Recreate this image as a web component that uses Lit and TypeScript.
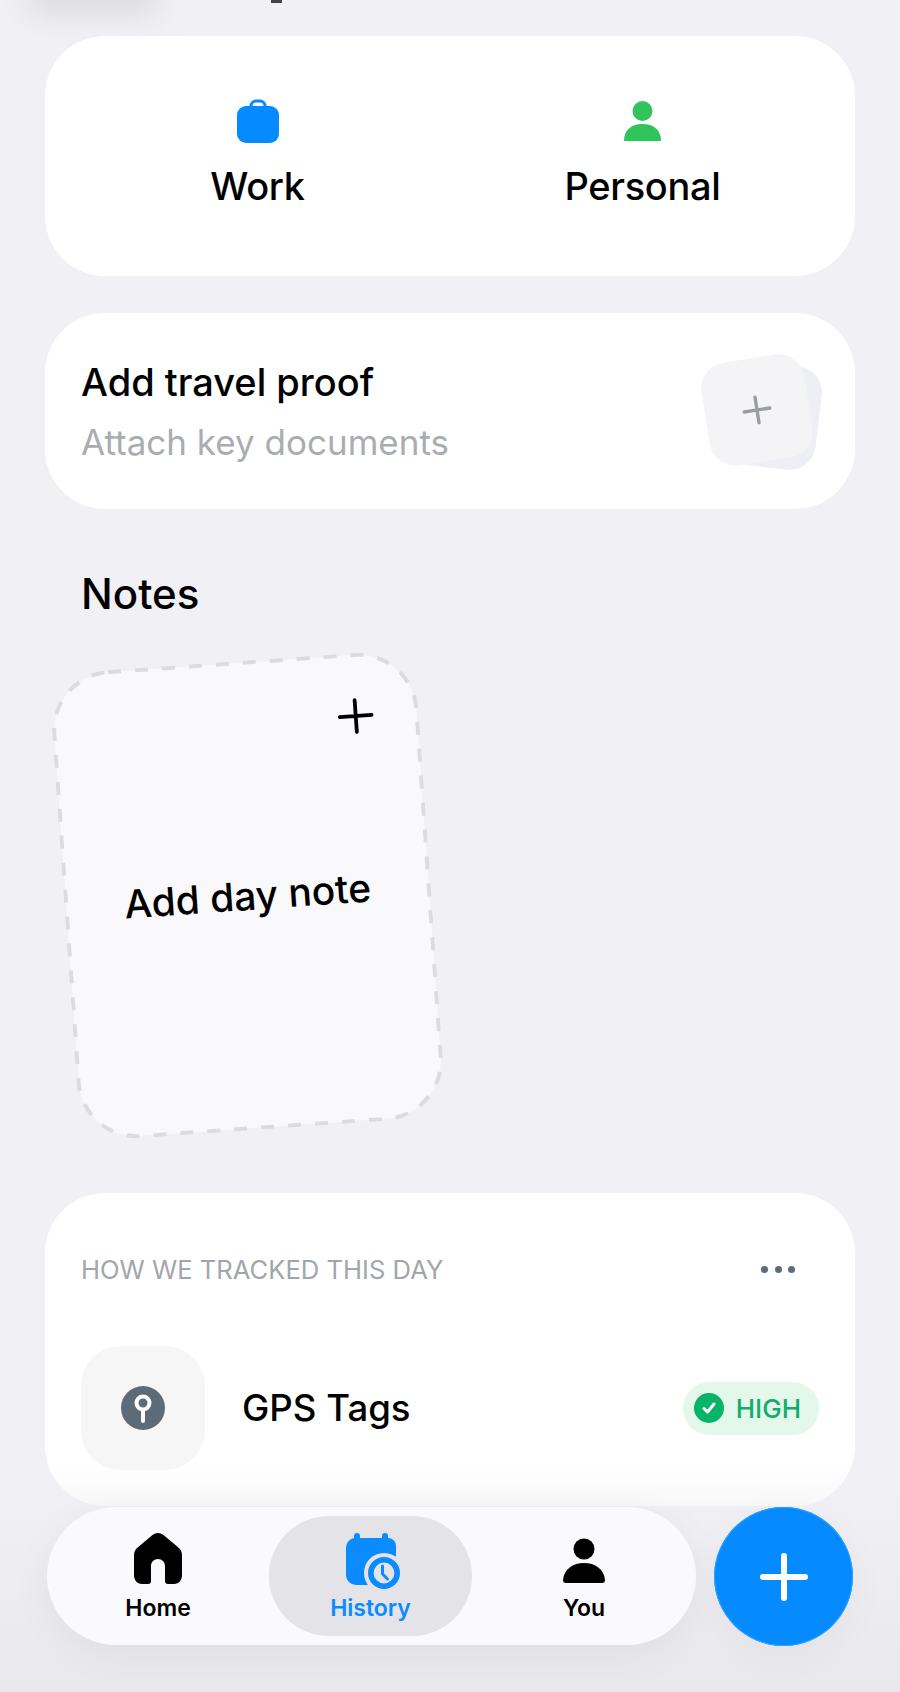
import { LitElement, css, html } from 'lit'
import { customElement } from 'lit/decorators.js'

@customElement('app-root')
export class AppRoot extends LitElement {
  static styles = css`
    :host {
      display: block;
      position: relative;
      width: 900px;
      height: 1692px;
      overflow: hidden;
      background: linear-gradient(#f0f0f5 0, #f0f0f5 1480px, #e9e9ed 1692px);
      font-family: 'Inter', 'Noto Sans', sans-serif;
      color: #000;
    }
    .smudge {
      position: absolute;
      left: 30px;
      top: -22px;
      width: 125px;
      height: 36px;
      background: #dcdcde;
      filter: blur(14px);
    }
    .clipped-letter {
      position: absolute;
      left: 271px;
      top: 0;
      width: 11px;
      height: 3px;
      background: #444;
    }
    main {
      display: flex;
      flex-direction: column;
      padding: 36px 45px 0;
    }
    .card {
      background: #fff;
      border-radius: 60px;
    }
    .kinds {
      display: grid;
      grid-template-columns: 1fr 1fr;
      height: 240px;
      padding: 0 20px;
      align-items: center;
      box-sizing: border-box;
    }
    .kind {
      display: flex;
      flex-direction: column;
      align-items: center;
      gap: 21px;
      padding-bottom: 6px;
      font-size: 38px;
      font-weight: 500;
      line-height: 44px;
      letter-spacing: -0.3px;
    }
    .kind svg {
      display: block;
    }
    .proof {
      display: flex;
      justify-content: space-between;
      align-items: center;
      height: 196px;
      margin-top: 37px;
      padding: 0 36px;
    }
    .proof h2 {
      margin: 0;
      font-size: 38px;
      font-weight: 500;
      line-height: 44px;
    }
    .proof p {
      margin: 18px 0 0;
      font-size: 35px;
      line-height: 40px;
      color: #a9adb2;
    }
    .thumbs {
      position: relative;
      width: 116px;
      height: 116px;
      margin-right: -4px;
    }
    .thumb {
      position: absolute;
      width: 104px;
      height: 104px;
      border-radius: 26px;
    }
    .thumb.back {
      left: 8px;
      top: 10px;
      background: #eeeef5;
      transform: rotate(7deg);
    }
    .thumb.front {
      left: -2px;
      top: 5px;
      background: #f4f4f6;
      transform: rotate(-9deg);
      display: flex;
      align-items: center;
      justify-content: center;
    }
    .notes-title {
      margin: 60px 0 0 36px;
      font-size: 42px;
      font-weight: 500;
      line-height: 50px;
    }
    .note {
      position: relative;
      width: 367px;
      height: 469px;
      margin: 42px 0 0 19px;
      transform: rotate(-4deg);
      display: flex;
      align-items: center;
      justify-content: center;
      font-size: 39px;
      font-weight: 500;
    }
    .note .edge {
      position: absolute;
      inset: 0;
    }
    .note span {
      position: relative;
    }
    .note .plus {
      position: absolute;
      right: 45px;
      top: 45px;
    }
    .tracking {
      margin-top: 63px;
      height: 313px;
      padding: 55px 36px 0;
      box-sizing: border-box;
      background: linear-gradient(#fff 0, #fff 270px, #f8f8f8 313px);
    }
    .tracking header {
      display: flex;
      justify-content: space-between;
      align-items: center;
      height: 42px;
    }
    .tracking h3 {
      margin: 0;
      font-size: 25.6px;
      font-weight: 400;
      color: #a2a6ab;
    }
    .dots {
      display: flex;
      gap: 6.5px;
      margin-right: 24px;
    }
    .dots i {
      width: 7px;
      height: 7px;
      border-radius: 50%;
      background: #5d6b78;
    }
    .source {
      display: flex;
      align-items: center;
      margin-top: 56px;
    }
    .tile {
      width: 124px;
      height: 124px;
      border-radius: 40px;
      background: #f6f6f7;
      display: flex;
      align-items: center;
      justify-content: center;
    }
    .source-name {
      flex: 1;
      margin-left: 37px;
      font-size: 36.6px;
      font-weight: 500;
    }
    .badge {
      display: flex;
      align-items: center;
      gap: 12px;
      height: 53px;
      padding: 0 18px 0 11px;
      border-radius: 27px;
      background: #e3f7ea;
      color: #12ad6d;
      font-size: 26px;
      font-weight: 500;
    }
    .tabbar {
      position: absolute;
      left: 47px;
      top: 1507px;
      width: 649px;
      height: 138px;
      border-radius: 69px;
      background: #fafafd;
      box-shadow: 0 10px 40px rgba(0, 0, 0, 0.05);
      display: grid;
      grid-template-columns: 222px 203px 224px;
      box-sizing: border-box;
    }
    .tab {
      display: flex;
      flex-direction: column;
      align-items: center;
      margin: 9px 0;
      padding-top: 17px;
      box-sizing: border-box;
      border-radius: 60px;
      font-size: 23px;
      font-weight: 600;
      line-height: 28px;
    }
    .tab svg {
      display: block;
    }
    .tab .label {
      position: absolute;
      top: 87px;
    }
    .tab.active {
      background: #e4e4e8;
      color: #0a8cff;
    }
    .tab.active svg {
      margin-left: 6px;
    }
    .tab .you-icon {
      margin-top: 5px;
    }
    .fab {
      position: absolute;
      left: 714px;
      top: 1507px;
      width: 139px;
      height: 139px;
      border-radius: 50%;
      background: #058aff;
      box-shadow: 0 0 0 1px #2ba6ff inset, 0 10px 40px rgba(0, 0, 0, 0.04);
      display: flex;
      align-items: center;
      justify-content: center;
    }
  `

  render() {
    return html`
      <div class="smudge"></div>
      <div class="clipped-letter"></div>
      <main>
        <section class="card kinds">
          <div class="kind">
            <svg width="42" height="44" viewBox="0 0 42 44">
              <path fill="none" stroke="#058aff" stroke-width="3" d="M14 10V7a5 5 0 0 1 5-5h4a5 5 0 0 1 5 5v3"/>
              <rect x="0" y="7" width="42" height="37" rx="9" fill="#058aff"/>
            </svg>
            <span>Work</span>
          </div>
          <div class="kind">
            <svg width="37" height="44" viewBox="0 0 37 44">
              <circle cx="18.5" cy="12" r="10" fill="#31c45a"/>
              <path fill="#31c45a" d="M0 42c0-11 7-17 18.5-17S37 31 37 42z"/>
            </svg>
            <span>Personal</span>
          </div>
        </section>

        <section class="card proof">
          <div>
            <h2>Add travel proof</h2>
            <p>Attach key documents</p>
          </div>
          <div class="thumbs">
            <div class="thumb back"></div>
            <div class="thumb front">
              <svg width="30" height="30" viewBox="0 0 30 30">
                <path stroke="#9a9ea3" stroke-width="3.4" stroke-linecap="round" d="M15 2v26M2 15h26"/>
              </svg>
            </div>
          </div>
        </section>

        <h2 class="notes-title">Notes</h2>
        <section class="note">
          <svg class="edge" width="367" height="469" viewBox="0 0 367 469">
            <rect x="2" y="2" width="363" height="465" rx="58" fill="#f9f9fc" stroke="#dcdcdf"
              stroke-width="4" stroke-dasharray="13 14"/>
          </svg>
          <span>Add day note</span>
          <svg class="plus" width="36" height="36" viewBox="0 0 36 36">
            <path stroke="#000" stroke-width="3.8" stroke-linecap="round" d="M18 2v32M2 18h32"/>
          </svg>
        </section>

        <section class="card tracking">
          <header>
            <h3>HOW WE TRACKED THIS DAY</h3>
            <div class="dots"><i></i><i></i><i></i></div>
          </header>
          <div class="source">
            <div class="tile">
              <svg width="44" height="44" viewBox="0 0 44 44">
                <circle cx="22" cy="22" r="22" fill="#5d6b78"/>
                <circle cx="22" cy="17" r="6.5" fill="none" stroke="#fff" stroke-width="4"/>
                <path stroke="#fff" stroke-width="4" stroke-linecap="round" d="M22 24v11"/>
              </svg>
            </div>
            <div class="source-name">GPS Tags</div>
            <div class="badge">
              <svg width="30" height="30" viewBox="0 0 30 30">
                <circle cx="15" cy="15" r="15" fill="#05b369"/>
                <path fill="none" stroke="#fff" stroke-width="3" stroke-linecap="round" stroke-linejoin="round" d="M10 15.5l3.5 3.5 6.5-8"/>
              </svg>
              <span>HIGH</span>
            </div>
          </div>
        </section>
      </main>

      <nav class="tabbar">
        <div class="tab">
          <svg width="48" height="51" viewBox="0 0 48 51">
            <path d="M24 0c-2 0-4 .8-5.5 2L3 15c-2 2-3 4-3 7v20c0 5 3 9 8 9h6c2 0 3-1 3-3V33c0-4 3-7 7-7s7 3 7 7v15c0 2 1 3 3 3h6c5 0 8-4 8-9V22c0-3-1-5-3-7L29.5 2C28 .8 26 0 24 0z"/>
          </svg>
          <span class="label">Home</span>
        </div>
        <div class="tab active">
          <svg width="56" height="58" viewBox="0 0 56 58">
            <path fill="#0a8cff" d="M11 0h0a3 3 0 0 1 3 3v2h22V3a3 3 0 0 1 6 0v2a8 8 0 0 1 8 8v31a8 8 0 0 1-8 8H10A10 10 0 0 1 0 42V15A10 10 0 0 1 8 5V3a3 3 0 0 1 3-3z"/>
            <circle cx="38" cy="40" r="20" fill="#e4e4e8"/>
            <circle cx="38" cy="40" r="13.2" fill="none" stroke="#0a8cff" stroke-width="5.6"/>
            <path fill="none" stroke="#0a8cff" stroke-width="3" stroke-linecap="round" stroke-linejoin="round" d="M36.5 33v8l5 5"/>
          </svg>
          <span class="label">History</span>
        </div>
        <div class="tab">
          <svg class="you-icon" width="42" height="46" viewBox="0 0 42 46">
            <circle cx="21" cy="11" r="10.5"/>
            <path d="M0 42C1 31 10 25 21 25s20 6 21 17c0 2-1 3-3 3H3c-2 0-3-1-3-3z"/>
          </svg>
          <span class="label">You</span>
        </div>
      </nav>
      <div class="fab">
        <svg width="48" height="48" viewBox="0 0 48 48">
          <path stroke="#fff" stroke-width="6" stroke-linecap="round" d="M24 3v42M3 24h42"/>
        </svg>
      </div>
    `
  }
}

declare global {
  interface HTMLElementTagNameMap {
    'app-root': AppRoot
  }
}
